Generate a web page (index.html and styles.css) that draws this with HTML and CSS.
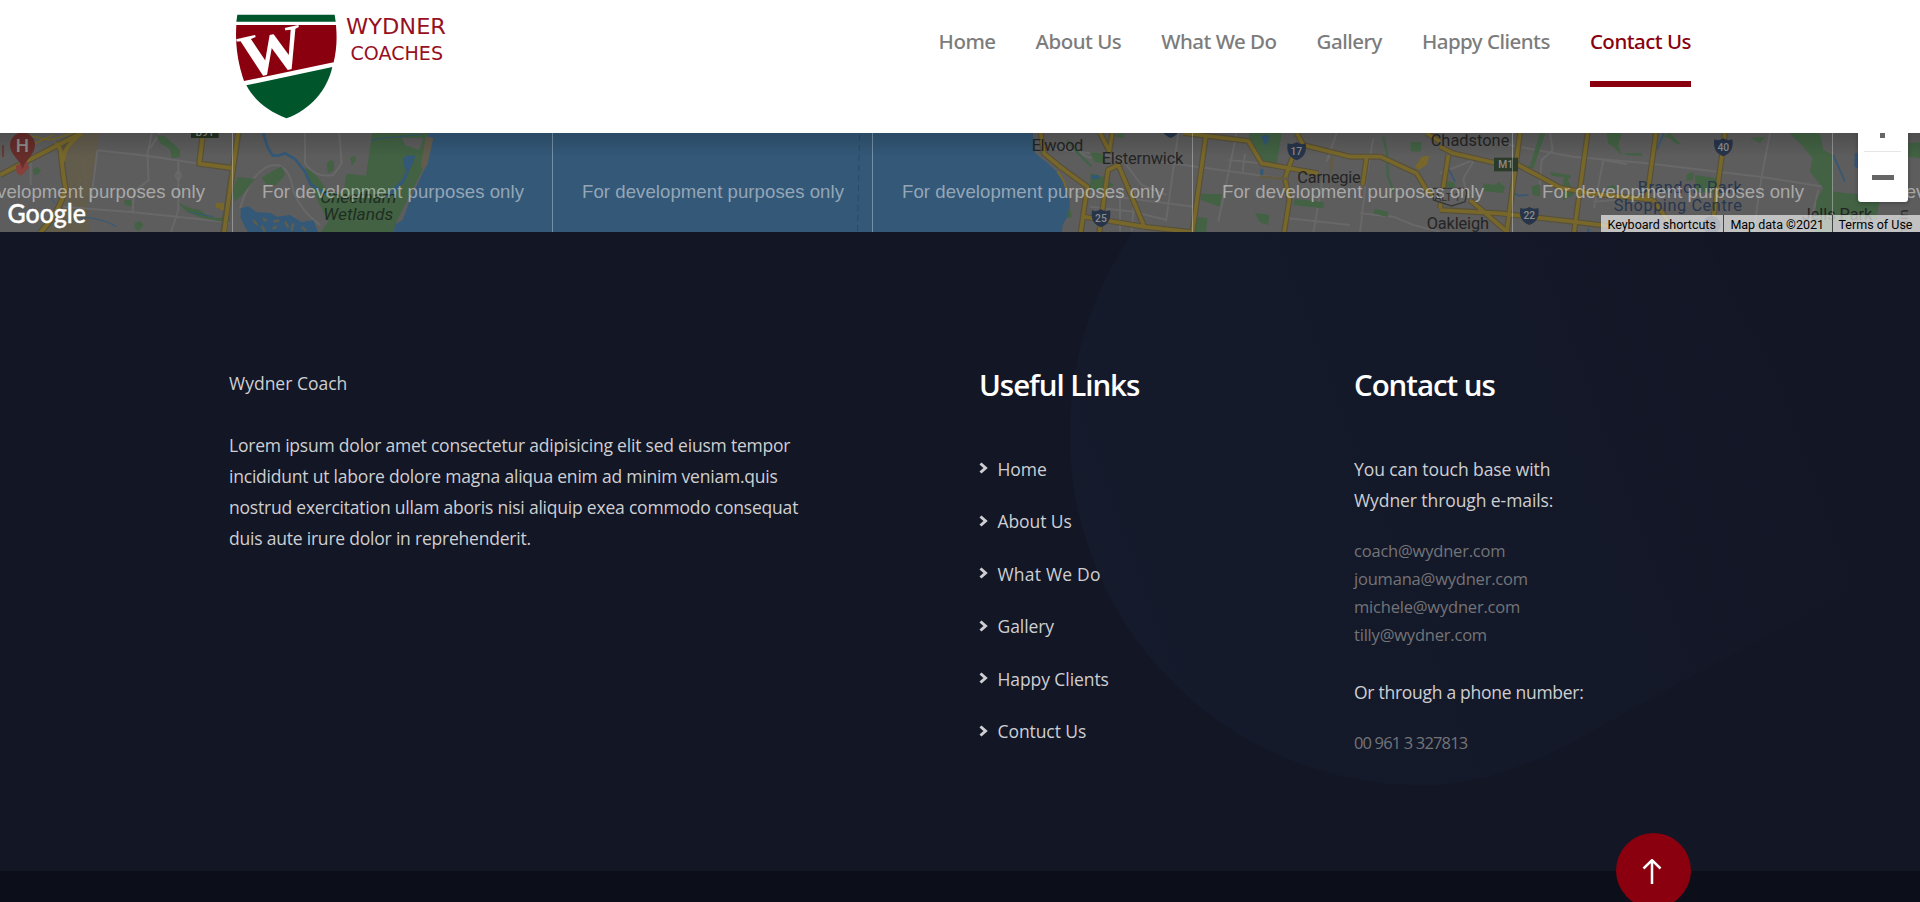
FILE: index.html
```html
<!DOCTYPE html>
<html lang="en">
<head>
<meta charset="utf-8">
<title>Wydner Coaches - Contact Us</title>
<link rel="stylesheet" href="styles.css">
</head>
<body>
<header class="header">
  <a class="logo" href="#">
    <svg width="260" height="125" viewBox="200 0 260 125">
      <g transform="translate(200 0) scale(.33333)">
        <path fill="#00552b" d="M112 44H404L407 65H109Z"/>
        <path fill="#8a000f" d="M109 75H408C412 120 409 152 401 187L132 243C113 190 105 130 109 75Z"/>
        <path fill="#00552b" d="M139 256L397 201C382 270 330 330 259 355C205 335 162 300 139 256Z"/>
      </g>
      <text class="logo-w" transform="translate(244.5 79) rotate(-13) scale(1.06 1)">W</text>
      <text class="logo-t" x="346" y="34" font-size="22" textLength="100" lengthAdjust="spacingAndGlyphs">WYDNER</text>
      <text class="logo-t" x="350.500" y="59.700" font-size="19.500" textLength="92.500" lengthAdjust="spacingAndGlyphs">COACHES</text>
    </svg>
  </a>
  <nav class="nav">
    <a href="#">Home</a>
    <a href="#">About Us</a>
    <a href="#">What We Do</a>
    <a href="#">Gallery</a>
    <a href="#">Happy Clients</a>
    <a class="active" href="#">Contact Us</a>
  </nav>
</header>

<section class="map">
  <svg class="map-canvas" width="1920" height="99" viewBox="0 133 1920 99">
    <defs>
      <linearGradient id="shade" x1="0" y1="0" x2="0" y2="1"><stop offset="0" stop-color="#000" stop-opacity=".16"/><stop offset="1" stop-color="#000" stop-opacity="0"/></linearGradient>
      <g id="shield"><path fill="#27344a" d="M-27-24Q-14-18 0-27Q14-18 27-24C31 0 24 18 0 27C-24 18-31 0-27-24Z"/></g>
    </defs>
    <rect y="133" width="1920" height="99" fill="#5d5d5d"/>

    <!-- western suburbs and wetlands -->
    <g transform="translate(0 125) scale(.33333)">
      <path fill="#625c4d" d="M230 24H298L288 100L262 240L268 324H118L190 225L205 150L185 65Z"/>
      <g fill="none" stroke="#686868" stroke-width="6">
        <path d="M292 76L440 92L600 116M292 76L272 235M455 24L442 90L446 165L402 200L398 262M535 110V255L512 324M190 245L400 262L690 292M92 110V180M480 24L450 70M526 150Q535 130 543 150Q535 180 526 150M720 250Q760 120 830 120Q870 125 880 200Q905 260 960 300M915 24V115Q945 160 1000 150L1025 115L1018 24"/>
      </g>
      <g fill="none" stroke="#675e4b" stroke-width="3"><path d="M215 130L285 82M212 150L280 110M212 180L275 150M230 125L245 210M250 105L260 210M205 205L270 195"/></g>
      <g fill="#426243">
        <path d="M470 30L495 34L540 75V96L515 100L510 72L480 55Z"/>
        <path d="M98 134L112 126L124 138L104 152Z"/><path d="M404 295L420 288L430 300L416 318L404 310Z"/><path d="M374 225H394V244L374 240Z"/>
        <path d="M534 232L570 250L600 255L625 275L655 280L690 270V292L655 288L610 280L560 260Z"/>
        <path d="M712 156L765 162L735 200L705 230L697 200Z"/><path d="M785 158L818 138L845 124L855 150L828 180L800 178Z"/>
        <path d="M980 118L992 104L1002 110V134L985 145ZM1050 98L1065 92L1068 105L1056 122Z"/>
        <path d="M1117 24H1300L1275 120L1240 190L1185 300L1180 324H960L985 290L940 200L914 140L918 128L948 150L985 200L1030 205L1040 146L1098 152Z"/>
      </g>
      <path fill="#5d5d5d" d="M1205 38L1270 40L1258 76L1215 60Z"/>
      <path fill="#335878" d="M1285 24H1440V324H1181L1186 298L1208 285L1230 225L1275 130Z"/>
      <path fill="#625c4d" d="M1277 35L1300 38L1282 120L1270 135L1262 125Z"/>
      <g fill="none" stroke="#335878" stroke-width="8" stroke-linejoin="round">
        <path d="M790 24L802 65L818 92H835L855 85L885 102L915 140L932 178L980 210"/>
        <path d="M1240 92L1220 145L1210 168L1160 215" stroke-width="10"/><path d="M1115 46L1140 40L1200 35L1265 28" stroke-width="3"/><path d="M570 262L640 275M150 215L165 235M235 280L270 278L320 290L350 305" stroke-width="3"/>
      </g>
      <path fill="#335878" d="M1208 100L1225 90L1245 95L1235 125L1215 135ZM722 250L745 244L770 262L812 264L830 275L870 270L905 292L940 285L955 324H745L722 280Z"/>
      <g fill="none" stroke="#5b5d50" stroke-width="8"><path d="M760 285L772 300M788 280L800 288M785 302L795 320M820 290L838 286M818 312L830 303M855 290L865 308M880 295L875 318M905 305L918 318"/></g>
      <g fill="none" stroke-linejoin="round">
        <path stroke="#57503a" stroke-width="19" d="M0 150L240 26M165 55Q182 65 183 85Q190 160 197 190Q180 260 120 324M240 26Q205 45 188 80M609 24L598 116L697 129M715 24L670 324"/>
        <path stroke="#77672a" stroke-width="12" d="M0 150L240 26M165 55Q182 65 183 85Q190 160 197 190Q180 260 120 324M245 26Q210 50 195 80L188 110M609 24L598 116L697 129M714 24L672 324"/>
        <path stroke="#77672a" stroke-width="5" d="M80 30L150 45L220 24M95 60L160 30"/>
      </g>
      <path fill="#77672a" d="M647 234H672V256H660V248H647Z"/>
      <path fill="#873f3c" d="M48 122L80 108L87 128L64 152L50 145Z"/>
      <path fill="#662d2a" d="M68 132C62 105 30 90 30 60A37 37 0 1 1 105 60C105 90 74 105 68 132Z"/>
      <text x="67" y="81" class="m-pin">H</text><text x="3" y="96" class="m-red">l</text>
      <rect x="573" y="5" width="83" height="34" fill="#263222"/><text x="614" y="33" class="m-route">B91</text>
      <g class="m-park"><text x="1075" y="233" textLength="228" lengthAdjust="spacingAndGlyphs">Cheetham</text><text x="1075" y="285" textLength="210" lengthAdjust="spacingAndGlyphs">Wetlands</text></g>
    </g>

    <!-- bay -->
    <rect x="478" y="133" width="520" height="99" fill="#335878"/>
    <path d="M859.500 135L857.500 232" stroke="#2c4964" stroke-dasharray="6 4" fill="none"/>

    <!-- Elwood to Carnegie -->
    <g transform="translate(960 125) scale(.33333)">
      <path fill="#5d5d5d" d="M90 24H260V330H90Z"/>
      <path fill="#335878" d="M0 20H218L225 85L258 110L295 145L318 190L330 230L325 270L308 300L304 330H0Z"/>
      <g fill="none" stroke="#686868" stroke-width="6"><path d="M270 70L480 95M350 200L620 235L700 245M480 95L545 180L620 210M655 24L618 290M480 190V320M390 245L520 260L620 285M525 190L515 320M600 110L965 160M830 24L808 130L775 290M855 85L848 140M805 105L905 115M1130 24L1100 110M1090 150L1060 324M985 280L1170 300M1200 265L1300 275L1360 300L1440 320M1240 40L1220 150L1200 324M395 100L300 60"/></g>
      <g fill="#426243"><path d="M868 24H965L950 118H905L868 65ZM390 82L425 85L440 115L405 112ZM392 145L430 155L462 180L430 200L390 190ZM722 206L785 208L780 245L722 225ZM706 275L742 280L738 320H706ZM885 264L928 270L924 300L900 292ZM1005 222L1092 232L1090 250L1000 240ZM1245 252L1285 260L1283 276L1240 265ZM1352 50L1385 52L1382 80L1352 78ZM328 240L335 275L322 280Z"/><path d="M460 32L490 24V40Z"/></g>
      <path d="M1270 35L1282 90L1283 150L1300 200M322 45L350 80L395 125" fill="none" stroke="#42624a" stroke-width="7"/>
      <path fill="#315878" d="M905 32L926 30V50L912 60ZM901 132H910V150H901ZM392 152L415 150L418 160L400 164Z"/>
      <g fill="none" stroke-linejoin="round">
        <path stroke="#57503a" stroke-width="18" d="M242 24L252 85L300 125L382 185L362 324M420 24L448 78L457 24M418 324L444 135L475 120L555 310M370 275L550 305L700 322M670 24L865 48L905 115L1075 145M738 30L697 324M1010 24L1030 60L1170 95L1262 95L1370 145L1400 195L1440 225M1220 95L1208 180M1000 90L975 160L988 225L972 324M1400 24L1440 50"/>
        <path stroke="#77672a" stroke-width="11" d="M242 24L252 85L300 125L382 185L362 324M420 24L448 78L457 24M418 324L444 135L475 120L555 310M370 275L550 305L700 322M670 24L865 48L905 115L1075 145M738 30L697 324M1010 24L1030 60L1170 95L1262 95L1370 145L1400 195L1440 225M1220 95L1208 180M1000 90L975 160L988 225L972 324M1400 24L1440 50"/>
        <path stroke="#77672a" stroke-width="6" d="M292 140L310 165L320 195"/><path stroke="#625a42" stroke-width="8" d="M1117 95L1112 145M900 155L985 162"/>
      </g>
      <path fill="#77672a" d="M1365 125L1385 95L1408 92L1400 120L1375 135Z"/>
      <use href="#shield" x="632" y="12"/><use href="#shield" x="1010" y="79"/><use href="#shield" x="423" y="280"/>
      <text class="m-route" x="1009" y="89">17</text><text class="m-route" x="423" y="290">25</text>
      <g class="m-town"><text x="215" y="79" textLength="155">Elwood</text><text x="425" y="117" textLength="245">Elsternwick</text><text x="1012" y="174" textLength="190">Carnegie</text></g>
    </g>

    <!-- Chadstone to Jells Park -->
    <g transform="translate(1440 125) scale(.33333)">
      <g fill="none" stroke="#686868" stroke-width="6"><path d="M180 55L400 95L620 115L960 155L1180 190M330 24L338 75L305 105L298 190M490 105L462 250M490 105L560 118M990 24L965 155L940 324M100 110L70 160L80 210M0 145L100 105M1135 195L1120 260L1080 324M460 230L640 215"/></g>
      <g fill="#426243"><path d="M500 24H545L535 60L545 90L520 65L505 55ZM670 34L690 24L725 60L705 55L690 40ZM550 85H605L608 93L560 90ZM740 148L762 142L758 165L740 168ZM765 150L830 160L828 205L768 200ZM930 38L975 36L960 55ZM330 142L392 150V160L335 152ZM130 175L165 180L175 170L195 185L190 204L130 198ZM275 185L300 178V215L278 210ZM370 165L380 150L400 210L370 225ZM500 185L520 180L540 195L505 190ZM250 130L270 122L300 24L315 26L280 130ZM1048 24H1140L1150 75L1178 90V324H1120L1130 225L1150 190L1110 140L1118 100L1085 60ZM1180 200L1320 215L1310 280L1180 290ZM1405 55L1440 52V100L1405 95ZM15 165L45 175V188L18 185Z"/></g>
      <g fill="none" stroke="#345876" stroke-width="5"><path d="M25 130L45 170M210 195L235 212L265 210M672 24L650 75M1180 90L1215 170M445 310V324M785 185V205"/></g>
      <path fill="#335878" d="M1244 85L1256 83V130L1243 125Z"/>
      <g fill="none" stroke-linejoin="round">
        <path stroke="#57503a" stroke-width="18" d="M0 65L40 85L170 115L235 120L300 155L360 188L450 205L640 225M25 90L0 250M240 24L200 324M443 24L402 324M648 24L620 225M855 24L820 280M0 255L180 265L400 290L520 305M90 225L205 324M640 225L710 324"/>
        <path stroke="#77672a" stroke-width="11" d="M0 65L40 85L170 115L235 120L300 155L360 188L450 205L640 225M25 90L0 250M240 24L200 324M443 24L402 324M648 24L620 225M855 24L820 280M0 255L180 265L400 290L520 305M90 225L205 324M640 225L710 324"/>
      </g>
      <rect x="162" y="98" width="72" height="41" fill="#2c3a29"/><text class="m-route" x="197" y="130">M1</text>
      <path d="M-20 190H70Q80 190 80 205L75 230L35 243L-20 225Z" fill="#606060" stroke="#383838" stroke-width="4"/><text class="m-alt" x="22" y="228">ALT 1</text>
      <use href="#shield" x="850" y="67"/><use href="#shield" x="268" y="273"/><text class="m-route" x="850" y="77">40</text><text class="m-route" x="268" y="283">22</text>
      <circle cx="815" cy="300" r="27" fill="#28354f"/>
      <g class="m-poi"><text x="593" y="205" textLength="312">Brandon Park</text><text x="521" y="259" textLength="385">Shopping Centre</text></g>
      <g class="m-town"><text x="1085" y="285" textLength="212">Jells Park</text><text x="-28" y="63" textLength="236">Chadstone</text><text x="-40" y="311" textLength="187">Oakleigh</text><text class="m-street" transform="translate(1404 330) rotate(-90)">ntlin</text></g>
    </g>

    <path d="M232.500 133V232M552.500 133V232M872.500 133V232M1192.500 133V232M1512.500 133V232M1832.500 133V232" stroke="#fff" stroke-opacity=".33"/>
    <g class="m-dev">
      <text x="-57" y="197.500" textLength="262">For development purposes only</text>
      <text x="262" y="197.500" textLength="262">For development purposes only</text>
      <text x="582" y="197.500" textLength="262">For development purposes only</text>
      <text x="902" y="197.500" textLength="262">For development purposes only</text>
      <text x="1222" y="197.500" textLength="262">For development purposes only</text>
      <text x="1542" y="197.500" textLength="262">For development purposes only</text>
      <text x="1862" y="197.500" textLength="262">For development purposes only</text>
    </g>
    <text class="m-google" x="7.500" y="223" textLength="78.500" lengthAdjust="spacingAndGlyphs">Google</text>
    <rect y="133" width="1920" height="24" fill="url(#shade)"/>
  </svg>
  <div class="zoom-control">
    <svg width="50" height="69" viewBox="0 0 50 69"><path fill="#666" d="M22 0H27V5H22ZM14 42H36V47H14Z"/><path fill="#e6e6e6" d="M6 18H43V19H6Z"/></svg>
  </div>
  <div class="credits"><span>Keyboard shortcuts</span><span>Map data ©2021</span><span>Terms of Use</span></div>
</section>

<footer class="footer">
  <svg class="footer-shape" width="850" height="553" viewBox="1070 232 850 553">
    <defs><linearGradient id="fade" x1="1070" y1="600" x2="1800" y2="330" gradientUnits="userSpaceOnUse"><stop offset="0" stop-color="#151a2c"/><stop offset=".5" stop-color="#141929"/><stop offset="1" stop-color="#131625"/></linearGradient></defs>
    <path fill="url(#fade)" d="M1133 232C1090 295 1070 365 1070 435C1070 628 1228 785 1422 785C1500 785 1560 750 1640 704L1870 580L1885 565L1700 232Z"/>
  </svg>
  <div class="columns">
    <div class="about">
      <p>Wydner Coach</p>
      <p class="lorem">Lorem ipsum dolor amet consectetur adipisicing elit sed eiusm tempor<br>incididunt ut labore dolore magna aliqua enim ad minim veniam.quis<br>nostrud exercitation ullam aboris nisi aliquip exea commodo consequat<br>duis aute irure dolor in reprehenderit.</p>
    </div>
    <div class="links">
      <h2>Useful Links</h2>
      <ul>
        <li><svg width="9" height="12" viewBox="0 0 9 12"><path d="M1.500 1.500L6.500 6L1.500 10.500"/></svg><a href="#">Home</a></li>
        <li><svg width="9" height="12" viewBox="0 0 9 12"><path d="M1.500 1.500L6.500 6L1.500 10.500"/></svg><a href="#">About Us</a></li>
        <li><svg width="9" height="12" viewBox="0 0 9 12"><path d="M1.500 1.500L6.500 6L1.500 10.500"/></svg><a class="loose" href="#">What We Do</a></li>
        <li><svg width="9" height="12" viewBox="0 0 9 12"><path d="M1.500 1.500L6.500 6L1.500 10.500"/></svg><a href="#">Gallery</a></li>
        <li><svg width="9" height="12" viewBox="0 0 9 12"><path d="M1.500 1.500L6.500 6L1.500 10.500"/></svg><a href="#">Happy Clients</a></li>
        <li><svg width="9" height="12" viewBox="0 0 9 12"><path d="M1.500 1.500L6.500 6L1.500 10.500"/></svg><a href="#">Contuct Us</a></li>
      </ul>
    </div>
    <div class="contact">
      <h2>Contact us</h2>
      <p>You can touch base with<br>Wydner through e-mails:</p>
      <div class="muted">
        <a href="#">coach@wydner.com</a>
        <a href="#">joumana@wydner.com</a>
        <a href="#">michele@wydner.com</a>
        <a href="#">tilly@wydner.com</a>
      </div>
      <p class="phone-label">Or through a phone number:</p>
      <div class="muted phone"><a href="#">00 961 3 327813</a></div>
    </div>
  </div>
</footer>
<div class="bottom-bar">
  <a class="to-top" href="#"><svg width="20" height="26" viewBox="0 0 20 26"><path d="M10 25V1.500M1.500 9.500L10 1.200L18.500 9.500"/></svg></a>
</div>
</body>
</html>
```

FILE: styles.css
```css
* { box-sizing: border-box; }
html, body { height: 100%; }
body { margin: 0; overflow: hidden; background: #0c0e19; font-family: "Open Sans", "Noto Sans", sans-serif; font-size: 17.5px; }
a { color: inherit; text-decoration: none; }
p, h2, ul { margin: 0; padding: 0; }
ul { list-style: none; }
svg { display: block; }

.header { display: flex; justify-content: space-between; height: 133px; padding: 0 229px 0 200px; background: #fff; }
.logo-w { font: bold 62px "Liberation Serif", serif; fill: #fff; }
.logo-t { font-family: "DejaVu Sans", sans-serif; fill: #970f22; }
.nav { display: flex; gap: 40px; align-items: flex-start; font-family: "Noto Sans", sans-serif; font-size: 20.5px; font-weight: 500; letter-spacing: -.52px; color: #7c7c7c; }
.nav a { padding: 26px 0 25px; line-height: 30px; border-bottom: 6px solid transparent; white-space: nowrap; }
.nav .active { color: #8a000f; border-color: #8a000f; }

.map { position: relative; height: 99px; overflow: hidden; }
.map text { font-family: Roboto, sans-serif; }
.map .m-dev { fill: #fff; fill-opacity: .48; font-size: 18.6px; }
.map .m-dev text { font-family: "Liberation Sans", Arial, sans-serif; }
.map .m-google { font: 500 26px Lato, sans-serif; fill: #fff; stroke: #fff; stroke-width: .4; }
.m-town { font-size: 49px; fill: #242424; }
.m-poi { font-size: 49px; fill: #28364f; }
.m-park { font-size: 47px; font-style: italic; fill: #1f2d21; }
.m-park text { text-anchor: middle; }
.m-street { font-size: 40px; }
.m-route { font-size: 31px; font-weight: 500; fill: #8c8c8c; text-anchor: middle; }
.m-alt { font-size: 32px; fill: #303030; text-anchor: middle; }
.m-pin { font-size: 56px; font-weight: 500; fill: #8d8d8d; text-anchor: middle; }
.m-red { font-size: 52px; fill: #6b2f2f; }
.zoom-control { position: absolute; top: 0; right: 12px; height: 69px; background: #fff; border-radius: 0 0 3px 3px; box-shadow: 0 1px 4px rgba(0, 0, 0, .3); }
.credits { position: absolute; right: 0; bottom: 0; display: flex; height: 17px; font: 12.5px/19px Roboto, sans-serif; color: #000; background: rgba(245, 245, 245, .67); }
.credits span { padding: 0 7.5px 0 6px; white-space: nowrap; }
.credits span + span { border-left: 1px solid #444; }

.footer { position: relative; height: 639px; padding: 136px 0 0 229px; background: #131625; color: #cecfd2; line-height: 31px; }
.footer-shape { position: absolute; top: 0; right: 0; }
.columns { position: relative; display: grid; grid-template-columns: 750px 375px 1fr; align-items: start; }
.lorem { margin-top: 31px; white-space: nowrap; letter-spacing: -.21px; }
h2 { margin: -1.5px 0 51px; font-size: 29.5px; line-height: 36px; font-weight: 600; letter-spacing: -1.05px; color: #fff; }
.links ul { display: grid; gap: 21.6px; }
.links li { display: flex; align-items: center; gap: 9.5px; line-height: 31px; letter-spacing: -.08px; }
.links .loose { letter-spacing: .2px; }
.links li svg { fill: none; stroke: #cecfd2; stroke-width: 3; margin-top: -2px; }
.contact p { letter-spacing: -.08px; }
.muted { display: grid; margin-top: 21px; color: #737478; font-size: 16.5px; line-height: 28px; letter-spacing: -.2px; }
.contact .phone-label { margin-top: 28px; letter-spacing: -.28px; }
.phone { letter-spacing: -.85px; }

.bottom-bar { position: relative; height: 31px; background: #0c0e19; }
.to-top { position: absolute; top: -38px; left: 1616px; display: grid; place-items: center; width: 75px; height: 75px; padding: 3px 3px 0 0; border-radius: 50%; background: #8a000f; }
.to-top svg { fill: none; stroke: #fff; stroke-width: 2.5; }
```
